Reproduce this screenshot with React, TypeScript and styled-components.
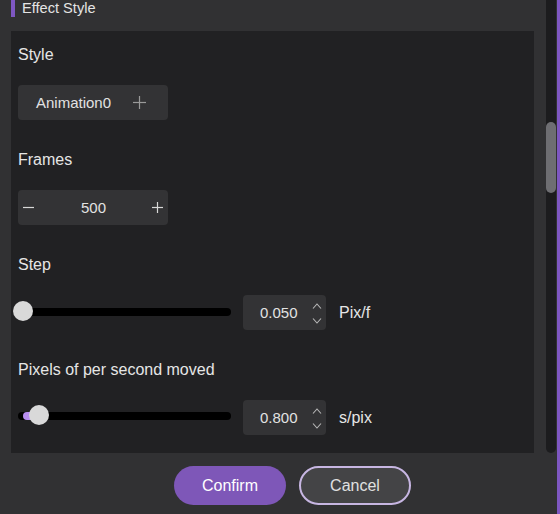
import React from "react";
import styled, { createGlobalStyle } from "styled-components";

const Global = createGlobalStyle`
  html, body { margin: 0; padding: 0; background: #313133; }
  body { font-family: "Liberation Sans", Arial, sans-serif; }
  * { box-sizing: border-box; }
`;

const Root = styled.div`
  width: 560px;
  height: 514px;
  display: flex;
  flex-direction: row;
  background: #313133;
  overflow: hidden;
`;

const MainColumn = styled.div`
  width: 557px;
  display: flex;
  flex-direction: column;
`;

const EdgeStrip = styled.div`
  width: 3px;
  background: #7e57c2;
`;

const ScrollArea = styled.div`
  height: 453px;
  display: flex;
  flex-direction: row;
`;

const Content = styled.div`
  width: 546px;
  display: flex;
  flex-direction: column;
`;

const ScrollTrack = styled.div`
  width: 10px;
  margin-right: 1px;
  background: #1c1c1e;
  border-radius: 0 0 5px 5px;
  display: flex;
  flex-direction: column;
  padding-top: 122px;
`;

const ScrollThumb = styled.div`
  height: 71px;
  border-radius: 5px;
  background: #6e6e72;
`;

const Header = styled.div`
  margin-left: 11px;
  height: 17px;
  line-height: 17px;
  border-left: 4px solid #7e57c2;
  padding-left: 7px;
  font-size: 14.6px;
  color: #e4e4e4;
`;

const Panel = styled.div`
  margin: 14px 12px 0 11px;
  height: 422px;
  background: #212123;
  padding: 13px 7px 18px;
  display: flex;
  flex-direction: column;
  gap: 29px;
`;

const Section = styled.div`
  display: flex;
  flex-direction: column;
  gap: 20px;
`;

const Label = styled.div`
  font-size: 16px;
  line-height: 20px;
  height: 21px;
  padding-top: 1px;
  color: #e6e6e6;
  white-space: nowrap;
`;

const StyleButton = styled.div`
  width: 150px;
  height: 35px;
  border-radius: 4px;
  background: #333335;
  display: flex;
  align-items: center;
  padding-left: 18px;
  gap: 22px;
  font-size: 15px;
  color: #e2e2e2;
`;

const Stepper = styled.div`
  width: 150px;
  height: 35px;
  border-radius: 4px;
  background: #333335;
  display: flex;
  align-items: center;
  justify-content: space-between;
  padding: 0 5px 0 5px;
  font-size: 15px;
  color: #e2e2e2;
`;

const StepperValue = styled.span`
  flex: 1;
  text-align: center;
  margin-left: 1px;
`;

const Row = styled.div`
  height: 35px;
  display: flex;
  align-items: center;
`;

const SliderWrap = styled.div`
  position: relative;
  width: 213px;
  height: 35px;
  display: flex;
  align-items: center;
  margin-right: 12px;
`;

const Track = styled.div<{ $dy: number }>`
  width: 100%;
  height: 8px;
  border-radius: 4px;
  background: #000;
  margin-top: ${(p) => p.$dy}px;
  position: relative;
  overflow: hidden;
`;

const Fill = styled.div`
  height: 100%;
  margin-left: 5px;
  background: #b88ef0;
  border-radius: 4px 0 0 4px;
`;

const Thumb = styled.div<{ $dy: number }>`
  position: absolute;
  top: ${(p) => 7.5 + p.$dy}px;
  width: 20px;
  height: 20px;
  border-radius: 50%;
  background: #d9d9d9;
`;

const NumBox = styled.div`
  width: 83px;
  height: 35px;
  border-radius: 4px;
  background: #333335;
  display: flex;
  align-items: center;
  padding: 0 4px 0 17px;
  font-size: 15px;
  color: #e2e2e2;
`;

const NumText = styled.span`
  flex: 1;
`;

const Arrows = styled.div`
  display: flex;
  flex-direction: column;
  gap: 9px;
  align-items: center;
  width: 10px;
  margin-top: 1px;
`;

const Unit = styled.span`
  margin-left: 13px;
  font-size: 16px;
  color: #e6e6e6;
`;

const Footer = styled.div`
  flex: 1;
  display: flex;
  justify-content: center;
  align-items: flex-start;
  padding-top: 13px;
  padding-left: 28px;
  gap: 13px;
`;

const Button = styled.button<{ $primary?: boolean }>`
  width: 112px;
  height: 39px;
  border-radius: 20px;
  font-family: "Liberation Sans", Arial, sans-serif;
  font-size: 16px;
  cursor: pointer;
  padding: 0;
  background: ${(p) => (p.$primary ? "#7e57b8" : "#444446")};
  color: ${(p) => (p.$primary ? "#ffffff" : "#e0e0e0")};
  border: ${(p) => (p.$primary ? "none" : "2px solid #c7b6e2")};
`;

const Plus = ({ size, color }: { size: number; color: string }) => (
  <svg width={size} height={size} viewBox={`0 0 ${size} ${size}`}>
    <line x1={0} y1={size / 2} x2={size} y2={size / 2} stroke={color} strokeWidth={1.2} />
    <line x1={size / 2} y1={0} x2={size / 2} y2={size} stroke={color} strokeWidth={1.2} />
  </svg>
);

const Minus = ({ size, color }: { size: number; color: string }) => (
  <svg width={size} height={size} viewBox={`0 0 ${size} ${size}`}>
    <line x1={0} y1={size / 2} x2={size} y2={size / 2} stroke={color} strokeWidth={1.2} />
  </svg>
);

const Chevron = ({ up }: { up?: boolean }) => (
  <svg width="10" height="6" viewBox="0 0 10 6">
    <polyline
      points={up ? "1,5.5 5,1 9,5.5" : "1,0.5 5,5 9,0.5"}
      fill="none"
      stroke="#b8b8b8"
      strokeWidth="1.1"
    />
  </svg>
);

const Slider = ({ fraction, dy, fill }: { fraction: number; dy: number; fill?: boolean }) => {
  const center = 5 + fraction * 208;
  return (
    <SliderWrap>
      <Track $dy={dy}>{fill && <Fill style={{ width: center - 5 }} />}</Track>
      <Thumb $dy={dy} style={{ left: center - 10 }} />
    </SliderWrap>
  );
};

const NumberField = ({ value }: { value: string }) => (
  <NumBox>
    <NumText>{value}</NumText>
    <Arrows>
      <Chevron up />
      <Chevron />
    </Arrows>
  </NumBox>
);

export default function App() {
  return (
    <Root>
      <Global />
      <MainColumn>
        <ScrollArea>
          <Content>
            <Header>Effect Style</Header>
            <Panel>
              <Section>
                <Label>Style</Label>
                <StyleButton>
                  <span>Animation0</span>
                  <Plus size={13} color="#9a9a9a" />
                </StyleButton>
              </Section>
              <Section>
                <Label>Frames</Label>
                <Stepper>
                  <Minus size={11} color="#d8d8d8" />
                  <StepperValue>500</StepperValue>
                  <Plus size={11} color="#d8d8d8" />
                </Stepper>
              </Section>
              <Section>
                <Label>Step</Label>
                <Row>
                  <Slider fraction={0} dy={-2} />
                  <NumberField value="0.050" />
                  <Unit>Pix/f</Unit>
                </Row>
              </Section>
              <Section>
                <Label>Pixels of per second moved</Label>
                <Row>
                  <Slider fraction={16 / 208} dy={-3} fill />
                  <NumberField value="0.800" />
                  <Unit>s/pix</Unit>
                </Row>
              </Section>
            </Panel>
          </Content>
          <ScrollTrack>
            <ScrollThumb />
          </ScrollTrack>
        </ScrollArea>
        <Footer>
          <Button $primary>Confirm</Button>
          <Button>Cancel</Button>
        </Footer>
      </MainColumn>
      <EdgeStrip />
    </Root>
  );
}
